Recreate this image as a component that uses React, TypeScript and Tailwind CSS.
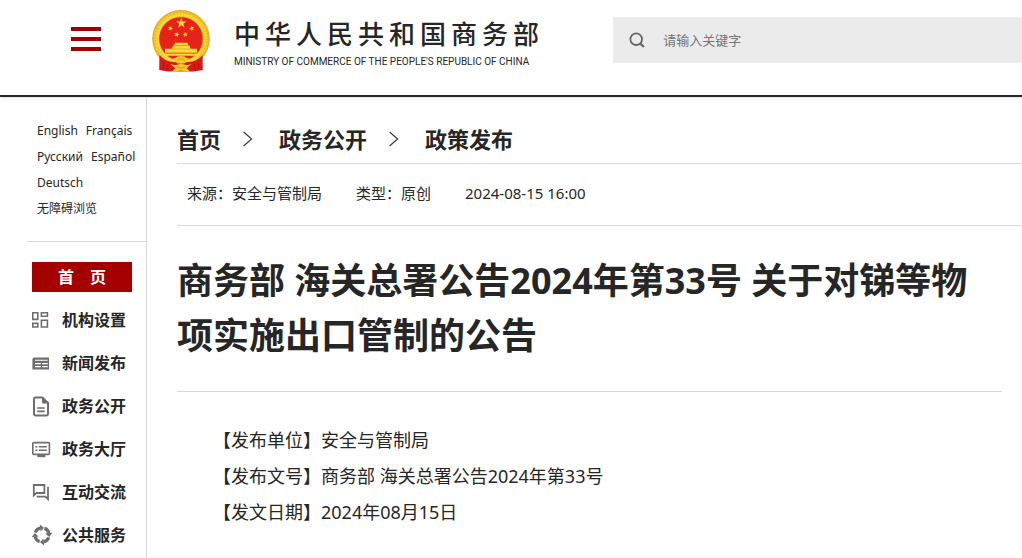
import type { ReactNode } from 'react';

const languages = [
  ['English', 'Français'],
  ['Русский', 'Español'],
  ['Deutsch'],
  ['无障碍浏览'],
];

const navItems: { label: string; icon: ReactNode }[] = [
  {
    label: '机构设置',
    icon: (
      <g fill="none" stroke="#6e6e6e" strokeWidth="1.6">
        <path d="M.8 2.8h5v6.6h-5zM9.400 2.800h6v3.400h-6zM.8 13.400h5v3.600h-5zM9.400 10.200h6V17h-6z" />
      </g>
    ),
  },
  {
    label: '新闻发布',
    icon: (
      <g>
        <path d="M1.6 4.4H17v12.200H.4V6z" fill="#6e6e6e" />
        <path d="M3 7.200h12.600M3 10.600h5.800M10 10.600h5.800M3 13.600h5.800M10 13.600h5.800" stroke="#fff" strokeWidth="1.1" />
      </g>
    ),
  },
  {
    label: '政务公开',
    icon: (
      <g fill="none" stroke="#6e6e6e" strokeWidth="2" strokeLinejoin="round">
        <path d="M10.600 1.600H3.400Q2 1.600 2 3v15q0 1.400 1.400 1.400h11.200Q16 19.400 16 18V7z" />
        <path d="M10.600 1.600V7H16z" fill="#6e6e6e" strokeWidth="1" />
        <path d="M5.200 12h7.600M5.200 15.400h7.600" strokeWidth="1.6" />
      </g>
    ),
  },
  {
    label: '政务大厅',
    icon: (
      <g fill="none" stroke="#6e6e6e" strokeWidth="1.6">
        <rect x=".8" y="3.6" width="16.6" height="11.8" rx="1" />
        <path d="M3.400 7.800h2M6.800 7.800h8M3.400 11.200h2M6.800 11.200h8" />
        <path d="M5.400 17h8" strokeWidth="2.4" />
      </g>
    ),
  },
  {
    label: '互动交流',
    icon: (
      <g fill="none" stroke="#6e6e6e" strokeWidth="1.8">
        <path d="M1.800 3h10.600v8H4.400l-2.600 2.400z" />
        <path d="M16 4.800v12.400l-2.600-2.600H4.600" />
      </g>
    ),
  },
  {
    label: '公共服务',
    icon: (
      <g fill="#6e6e6e">
        {[0, 90, 180, 270].map((deg) => (
          <g key={deg} transform={`rotate(${deg} 10 10)`}>
            <path d="M3.400 7.600Q4.400 3.800 8.400 3.200" fill="none" stroke="#6e6e6e" strokeWidth="3.2" />
            <path d="M7.800-.4l4.200 3.200-3.400 3.800z" />
          </g>
        ))}
      </g>
    ),
  },
];

const details = [
  '【发布单位】安全与管制局',
  '【发布文号】商务部 海关总署公告2024年第33号',
  '【发文日期】2024年08月15日',
];

const star = '0,-1 .24,-.32 .95,-.31 .38,.12 .59,.81 0,.4 -.59,.81 -.38,.12 -.95,-.31 -.24,-.32';

const Emblem = () => (
  <svg width="58" height="62" viewBox="0 0 58 62" aria-hidden="true" className="shrink-0">
    <defs>
      <radialGradient id="gold" cx="50%" cy="50%" r="50%">
        <stop offset="74%" stopColor="#d99a12" />
        <stop offset="80%" stopColor="#ffe040" />
        <stop offset="94%" stopColor="#f3c224" />
        <stop offset="100%" stopColor="#dca12a" />
      </radialGradient>
    </defs>
    <circle cx="29" cy="28.8" r="28.8" fill="url(#gold)" />
    <circle cx="29" cy="28.8" r="25.5" fill="none" stroke="#d6a01c" strokeWidth="5" strokeDasharray="1 2.2" opacity=".3" />
    <circle cx="29" cy="28.8" r="21.6" fill="#e5231b" />
    <g fill="#f8d83a">
      <polygon points={star} transform="translate(29.3 13.2) scale(5.4)" />
      <polygon points={star} transform="translate(18.4 18.4) rotate(15) scale(2.8)" />
      <polygon points={star} transform="translate(39.8 18.4) rotate(-15) scale(2.8)" />
      <polygon points={star} transform="translate(24.8 24.4) rotate(10) scale(2.8)" />
      <polygon points={star} transform="translate(33.4 24.4) rotate(-10) scale(2.8)" />
      <path d="M23 32.800h12.400l1 2.400H22z" />
      <path d="M21 35.600h16.400l1.200 3.200h6.600v4H13v-4h6.800z" />
      <path d="M11.800 43.400h34.600l-2.400 2.400H14z" />
    </g>
    <path d="M20 38.900h18" stroke="#e5a01c" strokeWidth=".6" />
    {/* ribbon and drapes over the lower rim */}
    <path d="M7.400 45Q14 52.400 22 52l7 1 7-1q8 .4 14.600-7l.2 15-9.200 1.600H16.400L7.200 60z" fill="#d7191b" />
    <path d="M11.600 52l-.4 8M15.600 54l-1 7M46.400 52l.4 8M42.400 54l1 7" stroke="#a80f12" strokeWidth=".8" />
    {/* gear and knot */}
    <path d="M21 48.200l3-.4 1.400-1.400 2-.2L29 45.400l1.600.8 2 .2 1.400 1.400 3 .4-2 3.400-3 1.800h-6l-3-1.800z" fill="#f5c727" />
    <path d="M25 50.400q4-3.400 8 0" fill="none" stroke="#d9980f" strokeWidth=".9" />
    <path d="M18.400 54q5.600 2 10.600-.4 5 2.400 10.600.4l-5 4.200 3.400 3.400q-4.600.4-9-1.200-4.400 1.600-9 1.200l3.400-3.400z" fill="#f3cb2c" />
    <path d="M24.600 57q4.400 2 8.800 0" fill="none" stroke="#c98a10" strokeWidth=".7" />
  </svg>
);

const Arrow = () => (
  <svg width="10" height="16" viewBox="0 0 10 16" fill="none" stroke="#3a3a3a" strokeWidth="1.2" aria-hidden="true">
    <path d="M.6 1l8 7-8 7" />
  </svg>
);

export default function App() {
  return (
    <div className="flex min-h-screen flex-col bg-white font-['Noto_Sans','Noto_Sans_CJK_SC',sans-serif] text-[#262626]">
      {/* Header */}
      <header className="flex h-[97px] items-start border-b-2 border-[#262626] shadow-sm">
        <button type="button" aria-label="Menu" className="mt-[27px] ml-[71px] flex w-[30px] shrink-0 flex-col gap-1.5">
          <span className="h-1 w-full bg-[#a40000]" />
          <span className="h-1 w-full bg-[#a40000]" />
          <span className="h-1 w-full bg-[#a40000]" />
        </button>

        <a href="#" className="mt-[10px] ml-[51px] flex shrink-0 gap-6">
          <Emblem />
          <span className="flex flex-col pt-0.5">
            <span className="font-['Noto_Sans_CJK_SC',sans-serif] text-[26px] leading-[42px] font-medium tracking-[5px]">中华人民共和国商务部</span>
            <span className="font-['Roboto',sans-serif] text-[10px] leading-4">
              MINISTRY OF COMMERCE OF THE PEOPLE'S REPUBLIC OF CHINA
            </span>
          </span>
        </a>

        <form className="mt-[17px] ml-auto flex h-[46px] w-2/5 items-center bg-[#ebebeb] pl-4" onSubmit={(e) => e.preventDefault()}>
          <button type="submit" aria-label="Search" className="shrink-0">
            <svg width="16" height="16" viewBox="0 0 16 16" fill="none" stroke="#666" strokeWidth="1.8">
              <circle cx="7.2" cy="7.2" r="5.8" />
              <path d="M11 11.400l4 3.600" strokeWidth="2.2" />
            </svg>
          </button>
          <input
            type="text"
            aria-label="请输入关键字"
            placeholder="请输入关键字"
            className="h-full min-w-0 flex-1 bg-transparent pl-[18px] text-[13px] outline-none placeholder:text-[#757575]"
          />
        </form>
      </header>

      <div className="flex flex-1">
        {/* Sidebar */}
        <aside className="w-[147px] shrink-0 border-r border-[#d9d9d9]">
          <div className="ml-[27px] border-b border-[#d9d9d9] pt-[21px] pb-[19px] pl-[10px] text-xs leading-[26px]">
            {languages.map((row) => (
              <div key={row[0]} className="flex gap-2 whitespace-nowrap">
                {row.map((lang) => (
                  <a key={lang} href="#">{lang}</a>
                ))}
              </div>
            ))}
          </div>

          <nav className="pt-5 pl-8 font-bold">
            <a href="#" className="block w-[100px] bg-[#a40000] text-center leading-[30px] text-white">首　页</a>
            <ul className="pt-1.5">
              {navItems.map((item) => (
                <li key={item.label}>
                  <a href="#" className="flex h-[43px] items-center gap-[10px]">
                    <svg width="20" height="20" viewBox="0 0 20 20" aria-hidden="true" className="shrink-0 overflow-visible">
                      {item.icon}
                    </svg>
                    {item.label}
                  </a>
                </li>
              ))}
            </ul>
          </nav>
        </aside>

        {/* Article */}
        <main className="min-w-0 flex-1 pl-[30px]">
          <div className="flex items-end gap-[22px] border-b border-[#d9d9d9] pt-6 pb-1.5 text-[22px] leading-9 font-bold">
            <a href="#">首页</a>
            <span className="flex h-9 items-center pr-1"><Arrow /></span>
            <a href="#">政务公开</a>
            <span className="flex h-9 items-center pr-1"><Arrow /></span>
            <a href="#">政策发布</a>
          </div>

          <div className="flex gap-[34px] border-b border-[#d9d9d9] pb-0.5 pl-[10px] text-[15px] leading-[59px]">
            <span>来源：安全与管制局</span>
            <span>类型：原创</span>
            <time dateTime="2024-08-15T16:00">2024-08-15 16:00</time>
          </div>

          <div className="mr-5">
            <h1 className="border-b border-[#d9d9d9] pt-[27px] pb-7 text-4xl leading-[55px] font-bold">
              商务部 海关总署公告2024年第33号 关于对锑等物项实施出口管制的公告
            </h1>
            <div className="pt-[30px] pl-9 text-lg leading-9">
              {details.map((line) => (
                <p key={line}>{line}</p>
              ))}
            </div>
          </div>
        </main>
      </div>
    </div>
  );
}
